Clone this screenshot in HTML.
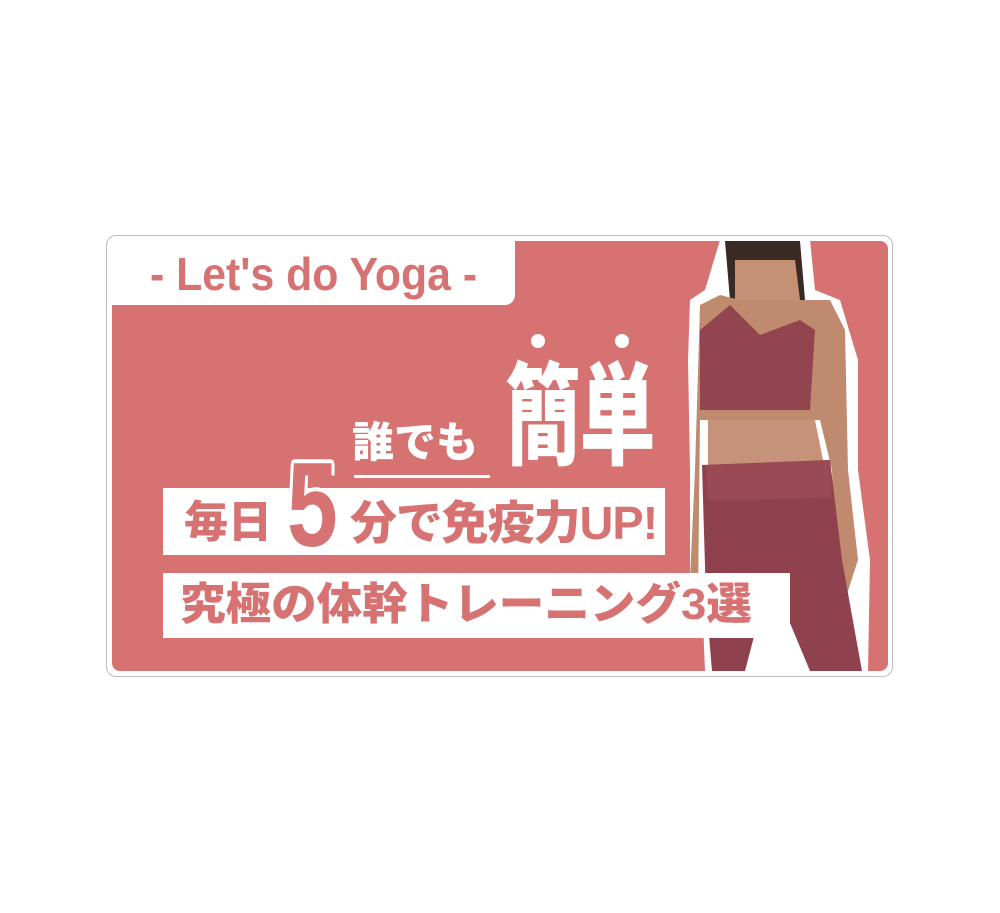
<!DOCTYPE html>
<html><head><meta charset="utf-8"><style>
body{margin:0;background:#fff;width:1000px;height:913px;position:relative;overflow:hidden;font-family:"Liberation Sans","Noto Sans CJK JP",sans-serif;font-weight:bold}
.card{position:absolute;left:106px;top:235px;width:785px;height:440px;border:1px solid #bdbdbd;border-radius:10px}
.pink{position:absolute;left:112px;top:241px;width:776px;height:430px;background:#d77272;border-radius:8px;overflow:hidden}
.tab{position:absolute;left:112px;top:241px;width:403px;height:64px;background:#fff;border-radius:6px 0 10px 0}
.tab span{position:absolute;left:38px;top:8px;color:#d77272;font-size:46px;line-height:50px;white-space:nowrap;transform:scaleX(0.93);transform-origin:left top}
.t{position:absolute;white-space:nowrap;line-height:1}
.box{position:absolute;background:#fff}
</style></head><body>
<div class="card"></div>
<div class="pink">
<svg width="776" height="430" style="position:absolute;left:0;top:0">
 <g transform="translate(-112,-241)">
  <path d="M690 300 L705 290 L720 240 L810 240 L815 290 L840 300 L858 360 L858 470 L870 560 L868 671 L705 671 L702 600 L690 585 L690 470 L688 360 Z" fill="#fff"/>
  <path d="M725 241 L800 241 L805 300 L730 300 Z" fill="#3a2a24"/>
  <path d="M700 305 L720 295 L740 300 L790 300 L830 300 L845 330 L848 470 L858 560 L845 600 L835 560 L832 470 L820 420 L700 420 L698 600 L690 580 L695 470 Z" fill="#c08a6e"/>
  <path d="M735 260 L795 260 L800 300 L735 300 Z" fill="#c59073"/>
  <path d="M700 330 L730 305 L760 335 L800 320 L815 330 L810 410 L700 410 Z" fill="#93454f"/>
  <path d="M708 420 L815 420 L825 470 L708 470 Z" fill="#c7927a"/>
  <path d="M702 465 L830 460 L842 560 L862 671 L810 671 L770 575 L745 671 L712 671 L706 600 Z" fill="#8f424d"/>
  <path d="M706 465 L830 460 L832 498 L708 500 Z" fill="#9a4a55"/>
 </g>
</svg>
</div>
<div class="tab"><span>- Let's do Yoga -</span></div>

<div class="t" style="left:531px;top:334px;"><div style="width:14px;height:14px;border-radius:50%;background:#fff"></div></div>
<div class="t" style="left:615px;top:334px;"><div style="width:14px;height:14px;border-radius:50%;background:#fff"></div></div>
<div class="t" style="left:352px;top:422px;color:#fff;font-size:42px;font-weight:900;">誰でも</div>
<div style="position:absolute;left:354px;top:475px;width:136px;height:3px;background:#fff"></div>
<div class="t" style="left:505px;top:362px;color:#fff;font-size:78px;font-weight:900;transform:scaleX(0.97) scaleY(1.42);transform-origin:left top;letter-spacing:-1px">簡単</div>

<div class="box" style="left:163px;top:488px;width:502px;height:67px"></div>
<div class="t" style="left:184px;top:501px;color:#d77272;font-size:44px;font-weight:900">毎日</div>
<div class="t" style="left:287px;top:445px;color:#d77272;font-size:120px;transform:scaleX(0.76);transform-origin:left top;text-shadow:0 -4px 0 #fff,4px 0 0 #fff,-4px 0 0 #fff,3px -3px 0 #fff,-3px -3px 0 #fff">5</div>
<div class="t" style="left:350px;top:500px;color:#d77272;font-size:46px;font-weight:900;letter-spacing:-1px;transform:scaleX(1.02);transform-origin:left">分で免疫力UP!</div>

<div class="box" style="left:163px;top:573px;width:627px;height:65px"></div>
<div class="t" style="left:180px;top:583px;color:#d77272;font-size:44px;font-weight:900;transform:scaleX(1.035);transform-origin:left">究極の体幹トレーニング3選</div>
</body></html>
